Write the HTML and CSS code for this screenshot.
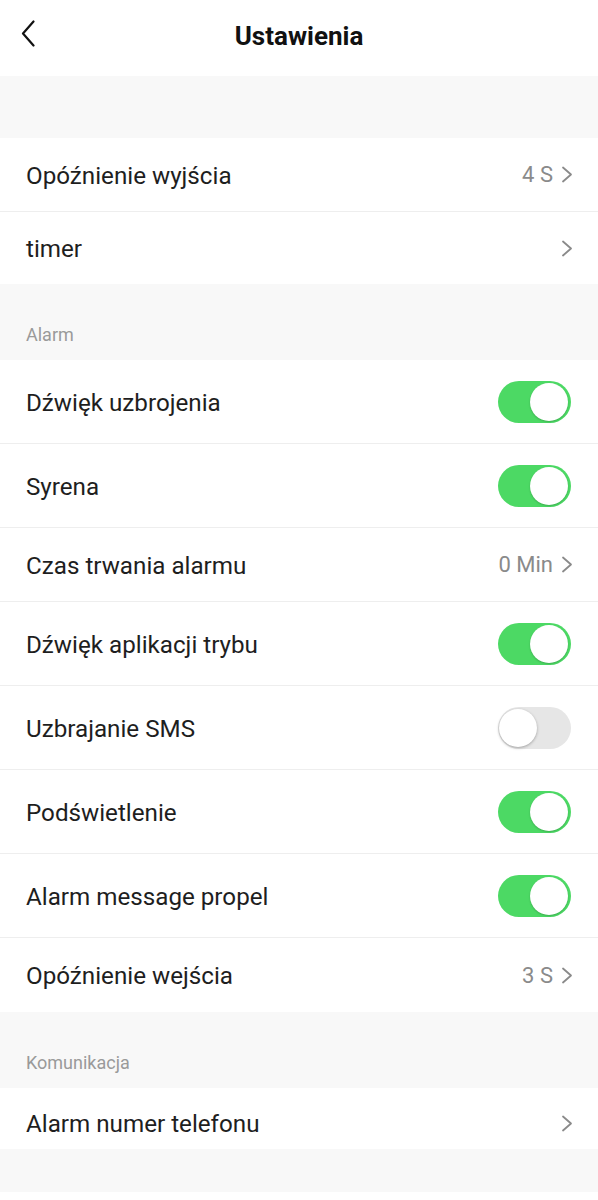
FILE: index.html
```html
<!DOCTYPE html>
<html lang="pl">
<head>
    <meta charset="UTF-8">
    <meta name="viewport" content="width=device-width, initial-scale=1.0">
    <title>Ustawienia</title>
    <link rel="stylesheet" href="styles.css">
</head>
<body>

    <div class="header">
        <span class="back">
            <svg width="14" height="27" viewBox="0 0 14 27"><path d="M12.5 1.5 L2 13.5 L12.5 25.5" fill="none" stroke="#111" stroke-width="2.2" stroke-linecap="round" stroke-linejoin="round"/></svg>
        </span>
        <h1>Ustawienia</h1>
    </div>

    <div class="spacer"></div>

    <div class="group">
        <div class="row short">
            <span class="label">Opóźnienie wyjścia</span>
            <span class="value">4 S <svg class="arrow" width="12" height="17" viewBox="0 0 12 17"><path d="M2 1.5 L10 8.5 L2 15.5" fill="none" stroke="#8a8a8a" stroke-width="1.8" stroke-linecap="round" stroke-linejoin="round"/></svg></span>
        </div>
        <div class="row first-end">
            <span class="label">timer</span>
            <span class="value"><svg class="arrow" width="12" height="17" viewBox="0 0 12 17"><path d="M2 1.5 L10 8.5 L2 15.5" fill="none" stroke="#8a8a8a" stroke-width="1.8" stroke-linecap="round" stroke-linejoin="round"/></svg></span>
        </div>
    </div>

    <div class="section">Alarm</div>

    <div class="group">
        <div class="row">
            <span class="label">Dźwięk uzbrojenia</span>
            <span class="toggle on"></span>
        </div>
        <div class="row">
            <span class="label">Syrena</span>
            <span class="toggle on"></span>
        </div>
        <div class="row short">
            <span class="label">Czas trwania alarmu</span>
            <span class="value">0 Min <svg class="arrow" width="12" height="17" viewBox="0 0 12 17"><path d="M2 1.5 L10 8.5 L2 15.5" fill="none" stroke="#8a8a8a" stroke-width="1.8" stroke-linecap="round" stroke-linejoin="round"/></svg></span>
        </div>
        <div class="row">
            <span class="label">Dźwięk aplikacji trybu</span>
            <span class="toggle on"></span>
        </div>
        <div class="row">
            <span class="label">Uzbrajanie SMS</span>
            <span class="toggle"></span>
        </div>
        <div class="row">
            <span class="label">Podświetlenie</span>
            <span class="toggle on"></span>
        </div>
        <div class="row">
            <span class="label">Alarm message propel</span>
            <span class="toggle on"></span>
        </div>
        <div class="row short last">
            <span class="label">Opóźnienie wejścia</span>
            <span class="value">3 S <svg class="arrow" width="12" height="17" viewBox="0 0 12 17"><path d="M2 1.5 L10 8.5 L2 15.5" fill="none" stroke="#8a8a8a" stroke-width="1.8" stroke-linecap="round" stroke-linejoin="round"/></svg></span>
        </div>
    </div>

    <div class="section">Komunikacja</div>

    <div class="group">
        <div class="row phone last">
            <span class="label">Alarm numer telefonu</span>
            <span class="value"><svg class="arrow" width="12" height="17" viewBox="0 0 12 17"><path d="M2 1.5 L10 8.5 L2 15.5" fill="none" stroke="#8a8a8a" stroke-width="1.8" stroke-linecap="round" stroke-linejoin="round"/></svg></span>
        </div>
    </div>

    <div class="footer"></div>

</body>
</html>
```

FILE: styles.css
```css
body {
    margin: 0;
    font-family: Roboto, "Noto Sans", Arial, sans-serif;
    background: #fff;
    color: #1e1e1e;
}

.header {
    height: 76px;
    display: flex;
    align-items: center;
    justify-content: center;
    position: relative;
}

.header h1 {
    margin: 0 0 5px;
    font-size: 26px;
    font-weight: 700;
    color: #111;
}

.back {
    position: absolute;
    left: 21px;
    top: 20px;
}

.spacer {
    height: 62px;
    background: #f8f8f8;
}

.section {
    height: 76px;
    box-sizing: border-box;
    background: #f8f8f8;
    color: #9a9a9a;
    font-size: 18px;
    line-height: 20px;
    padding: 41px 26px 0;
}

.group {
    background: #fff;
}

.row {
    height: 84px;
    box-sizing: border-box;
    border-bottom: 1px solid #eeeeee;
    display: flex;
    align-items: center;
    justify-content: space-between;
    padding: 0 27px 0 26px;
}

.row.short {
    height: 74px;
}

.row.first-end {
    height: 72px;
    border-bottom: none;
}

.row.last {
    border-bottom: none;
}

.row.phone {
    height: 61px;
    padding-top: 9px;
}

.label {
    font-size: 24.2px;
    padding-top: 2px;
}

.value {
    display: flex;
    align-items: center;
    gap: 8px;
    font-size: 22px;
    color: #8a8a8a;
}

.arrow {
    display: block;
    margin-right: -2px;
}

.toggle {
    width: 73px;
    height: 42px;
    border-radius: 21px;
    background: #e6e6e6;
    position: relative;
    box-sizing: border-box;
}

.toggle::after {
    content: "";
    position: absolute;
    top: 2px;
    left: 1px;
    width: 38px;
    height: 38px;
    border-radius: 50%;
    background: #fff;
    box-shadow: 0 1px 3px rgba(0, 0, 0, 0.3);
}

.toggle.on {
    background: #4cd964;
}

.toggle.on::after {
    left: auto;
    right: 3px;
    box-shadow: 0 1px 2px rgba(0, 0, 0, 0.2);
}

.footer {
    height: 43px;
    background: #f8f8f8;
}
```
